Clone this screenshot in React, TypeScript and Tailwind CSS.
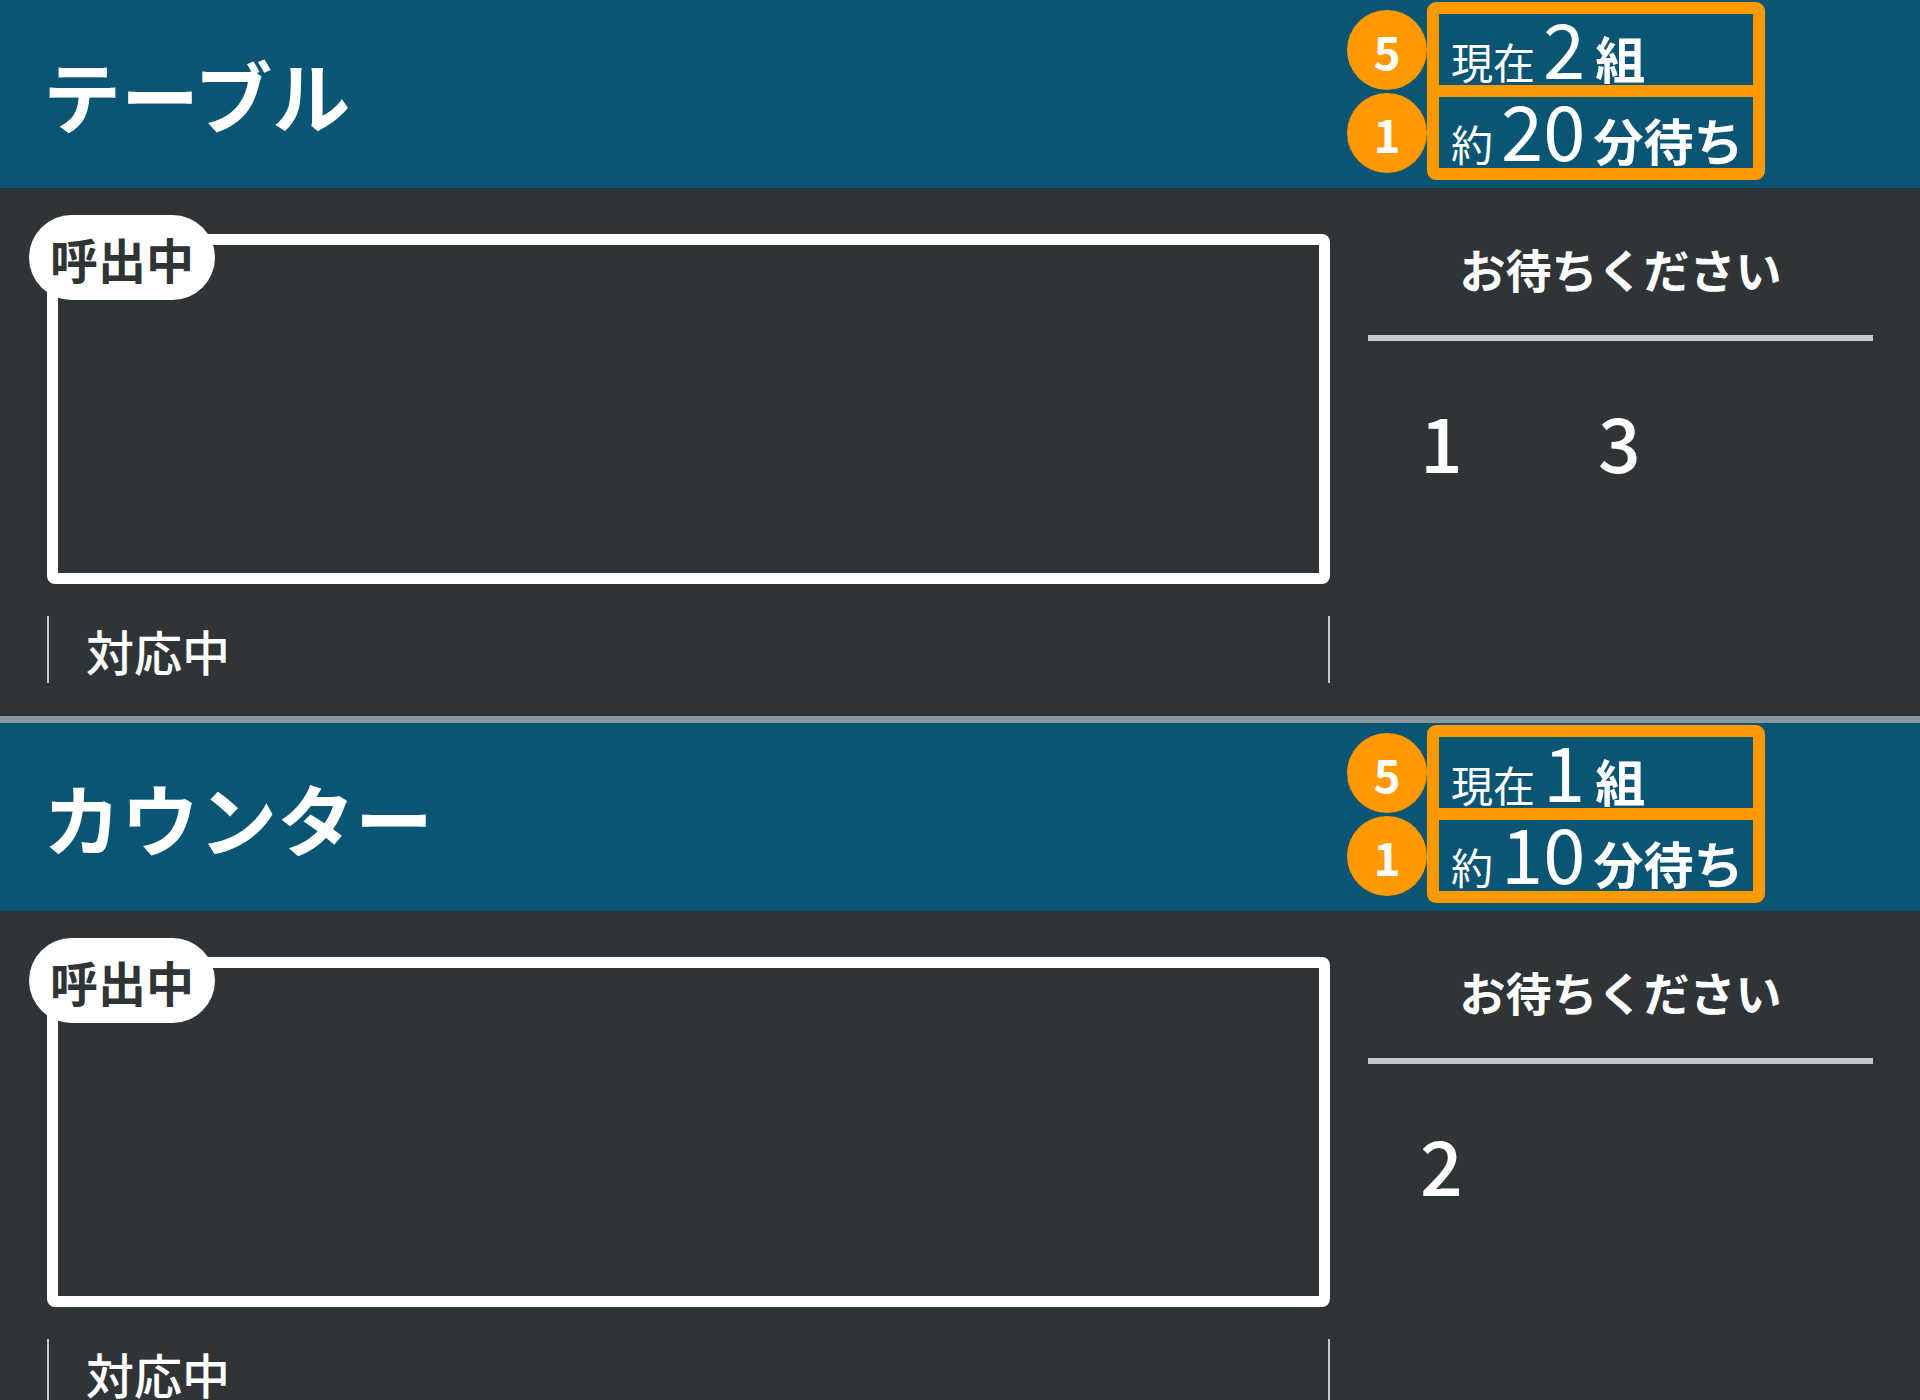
const sections = [
  { title: "テーブル", groups: "2", minutes: "20", waiting: ["1", "3"] },
  { title: "カウンター", groups: "1", minutes: "10", waiting: ["2"] },
];

function WaitBadge({ groups, minutes }: { groups: string; minutes: string }) {
  return (
    <div className="mr-[155px] mt-[2px] flex self-start">
      <div className="flex w-[80px] flex-col gap-[3px] pt-[8px]">
        <span className="flex h-[80px] w-[80px] items-center justify-center rounded-full bg-[#ff9900] text-[46px] font-bold leading-none text-white">
          5
        </span>
        <span className="flex h-[80px] w-[80px] items-center justify-center rounded-full bg-[#ff9900] text-[46px] font-bold leading-none text-white">
          1
        </span>
      </div>
      <div className="flex flex-col gap-[12px] rounded-[9px] bg-[#ff9900] p-[12px]">
        <div className="flex h-[71px] w-[314px] items-baseline whitespace-nowrap bg-[#0a5573] pl-[12px] text-white">
          <span className="text-[42px] leading-[64px]">現在</span>
          <span className="ml-[8px] text-[76px] leading-[64px]">{groups}</span>
          <span className="ml-[10px] text-[50px] font-bold leading-[64px]">組</span>
        </div>
        <div className="flex h-[71px] w-[314px] items-baseline gap-[8px] whitespace-nowrap bg-[#0a5573] pl-[12px] text-white">
          <span className="text-[42px] leading-[62px]">約</span>
          <span className="text-[76px] leading-[62px]">{minutes}</span>
          <span className="text-[50px] font-bold leading-[62px]">分待ち</span>
        </div>
      </div>
    </div>
  );
}

function Section({ s }: { s: (typeof sections)[number] }) {
  return (
    <section className="border-b-[7px] border-[#8a969c]">
      <header className="flex h-[188px] items-center justify-between bg-[#0a5573] pl-[43px]">
        <h1 className="text-[78px] font-bold leading-none text-white">{s.title}</h1>
        <WaitBadge groups={s.groups} minutes={s.minutes} />
      </header>
      <div className="flex gap-[38px] bg-[#2f3536] px-[47px] pb-[33px] pt-[46px]">
        <div className="w-[1283px]">
          <div className="relative h-[350px] rounded-[8px] border-[11px] border-white">
            <span className="absolute left-[-29px] top-[-30px] flex h-[85px] w-[186px] items-center justify-center rounded-full bg-white text-[48px] font-bold leading-none text-[#2f3536]">
              呼出中
            </span>
          </div>
          <div className="mt-[32px] flex h-[67px] items-center border-x-2 border-[#c8c8c8] pl-[37px] text-[48px] font-medium leading-none text-white">
            対応中
          </div>
        </div>
        <div className="w-[505px]">
          <p className="pt-[2px] text-center text-[46px] font-bold leading-[64px] text-white">
            お待ちください
          </p>
          <div className="mt-[35px] h-[6px] bg-[#c4c9cb]" />
          <div className="mt-[62px] flex flex-wrap pl-[52px]">
            {s.waiting.map((n) => (
              <span key={n} className="w-[178px] text-[75px] font-medium leading-none text-white">
                {n}
              </span>
            ))}
          </div>
        </div>
      </div>
    </section>
  );
}

export default function App() {
  return (
    <div className="h-[1400px] w-[1920px] overflow-hidden bg-[#2f3536] font-['Noto_Sans_CJK_JP',sans-serif]">
      {sections.map((s) => (
        <Section key={s.title} s={s} />
      ))}
    </div>
  );
}
